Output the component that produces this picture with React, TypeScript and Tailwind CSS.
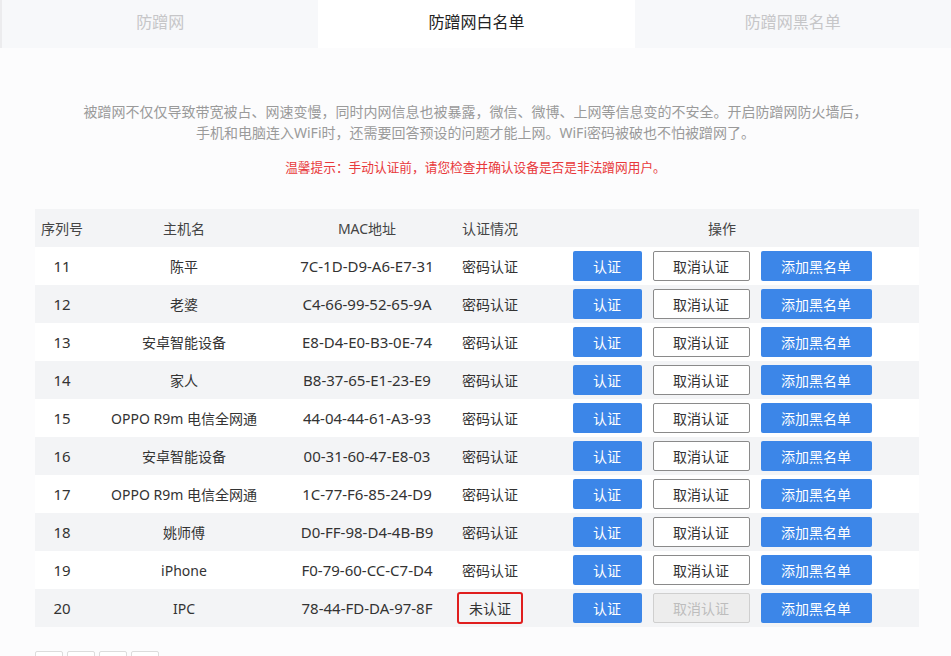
const rows = [
  { id: 11, host: '陈平', mac: '7C-1D-D9-A6-E7-31', status: '密码认证' },
  { id: 12, host: '老婆', mac: 'C4-66-99-52-65-9A', status: '密码认证' },
  { id: 13, host: '安卓智能设备', mac: 'E8-D4-E0-B3-0E-74', status: '密码认证' },
  { id: 14, host: '家人', mac: 'B8-37-65-E1-23-E9', status: '密码认证' },
  { id: 15, host: 'OPPO R9m 电信全网通', mac: '44-04-44-61-A3-93', status: '密码认证' },
  { id: 16, host: '安卓智能设备', mac: '00-31-60-47-E8-03', status: '密码认证' },
  { id: 17, host: 'OPPO R9m 电信全网通', mac: '1C-77-F6-85-24-D9', status: '密码认证' },
  { id: 18, host: '姚师傅', mac: 'D0-FF-98-D4-4B-B9', status: '密码认证' },
  { id: 19, host: 'iPhone', mac: 'F0-79-60-CC-C7-D4', status: '密码认证' },
  { id: 20, host: 'IPC', mac: '78-44-FD-DA-97-8F', status: '未认证' },
];

function Tabs() {
  return (
    <div className="flex h-12 text-[16px]">
      <div className="flex-1 flex items-center justify-center bg-[#f7f8fa] text-[#c6c6c8] border-l-2 border-[#ececee] pb-1">防蹭网</div>
      <div className="flex-1 flex items-center justify-center bg-white text-[#222] pb-1">防蹭网白名单</div>
      <div className="flex-1 flex items-center justify-center bg-[#f7f8fa] text-[#c6c6c8] pb-1">防蹭网黑名单</div>
    </div>
  );
}

export default function App() {
  return (
    <div
      className="w-[951px] h-[656px] overflow-hidden bg-[#fcfcfd]"
      style={{ fontFamily: '"Noto Sans", "Noto Sans CJK SC", sans-serif' }}
    >
      <Tabs />

      <div className="pt-[53px] text-center text-[14px] leading-[21px] text-[#9a9a9a]">
        <p>被蹭网不仅仅导致带宽被占、网速变慢，同时内网信息也被暴露，微信、微博、上网等信息变的不安全。开启防蹭网防火墙后，</p>
        <p>手机和电脑连入WiFi时，还需要回答预设的问题才能上网。WiFi密码被破也不怕被蹭网了。</p>
      </div>
      <p className="mt-[15px] text-center text-[12.7px] leading-[18px] text-[#e8393b]">
        温馨提示：手动认证前，请您检查并确认设备是否是非法蹭网用户。
      </p>

      <div className="mt-[33px] ml-[35px] w-[884px] text-[14px]">
        <div className="flex h-[38px] items-center bg-[#f3f4f6] text-[#444]">
          <div className="w-[54px] text-center">序列号</div>
          <div className="w-[190px] text-center">主机名</div>
          <div className="w-[176px] text-center">MAC地址</div>
          <div className="w-[70px] text-center">认证情况</div>
          <div className="flex-1 text-center">操作</div>
        </div>
        {rows.map((r, i) => {
          const off = r.status === '未认证';
          return (
            <div key={r.id} className={`flex h-[38px] items-center text-[#333] ${i % 2 === 1 ? 'bg-[#f3f4f6]' : 'bg-white'}`}>
              <div className="w-[54px] text-center text-[15px]">{r.id}</div>
              <div className="w-[190px] text-center">{r.host}</div>
              <div className="w-[176px] text-center text-[15px]">{r.mac}</div>
              <div className="w-[70px] flex justify-center">
                {off ? (
                  <span className="flex h-[32px] w-[66px] items-center justify-center rounded-[3px] border-2 border-[#e01e1e]">未认证</span>
                ) : (
                  <span>{r.status}</span>
                )}
              </div>
              <div className="flex-1 flex justify-center gap-[11px]">
                <button className="h-[30px] w-[69px] rounded-[2px] bg-[#3c86e8] text-white">认证</button>
                <button
                  className={
                    off
                      ? 'h-[30px] w-[97px] rounded-[2px] border border-[#cfcfcf] bg-[#ededed] text-[#bdbdbd]'
                      : 'h-[30px] w-[97px] rounded-[2px] border border-[#8a8a8a] bg-white text-[#333]'
                  }
                >
                  取消认证
                </button>
                <button className="h-[30px] w-[111px] rounded-[2px] bg-[#3c86e8] text-white">添加黑名单</button>
              </div>
            </div>
          );
        })}
      </div>

      <div className="mt-[24px] ml-[35px] flex gap-[4px]">
        {[0, 1, 2, 3].map(k => (
          <div key={k} className="h-[26px] w-[28px] rounded-[2px] border border-[#dcdcdc] bg-white" />
        ))}
      </div>
    </div>
  );
}
